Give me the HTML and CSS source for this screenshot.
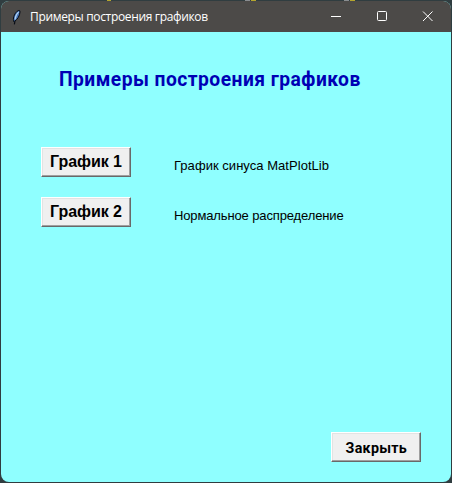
FILE: index.html
```html
<!DOCTYPE html>
<html lang="ru">
<head>
<meta charset="utf-8">
<title>Примеры построения графиков</title>
<link rel="stylesheet" href="styles.css">
</head>
<body>
<div class="window">
  <header class="titlebar">
    <svg class="feather" width="12" height="16" viewBox="0 0 12 16">
      <path d="M3 13 C1.500 10 3 5 6.200 2.300 C7.500 1.200 9.200 .8 9 3 C8.800 6.500 6.500 10.500 4 12" fill="#4a78b8" stroke="#080c14" stroke-width="1"/>
      <path d="M4 10.500 C4.300 7.500 5.800 4.500 7.700 2.800" fill="none" stroke="#b5d5f5" stroke-width="1.100"/>
      <path d="M4 11.500 L3.400 15.300" fill="none" stroke="#080c14" stroke-width="1.200"/>
    </svg>
    <span class="caption">Примеры построения графиков</span>
    <svg class="controls" width="104" height="12" viewBox="0 0 104 12" fill="none" stroke="#fff">
      <path d="M1 6.500H11"/>
      <rect x="47.500" y="1.500" width="9" height="9" rx="1"/>
      <path d="M93 1.500L102.500 11M102.500 1.500L93 11"/>
    </svg>
  </header>
  <main class="content">
    <h1 class="heading">Примеры построения графиков</h1>
    <div class="row">
      <button class="btn">График 1</button>
      <span class="label sine">График синуса MatPlotLib</span>
    </div>
    <div class="row">
      <button class="btn">График 2</button>
      <span class="label">Нормальное распределение</span>
    </div>
    <button class="btn close"><span class="close-text">Закрыть</span></button>
  </main>
</div>
</body>
</html>
```
FILE: styles.css
```css
* { box-sizing: border-box; }
body {
  margin: 0;
  height: 483px;
  padding: 1px;
  background:
    linear-gradient(#b5a52e, #b5a52e) 107px 0 / 4px 1px no-repeat,
    linear-gradient(#8a8d90, #8a8d90) 245px 0 / 5px 1px no-repeat,
    linear-gradient(#b5a52e, #b5a52e) 251px 0 / 5px 1px no-repeat,
    linear-gradient(#8a8d90, #8a8d90) 344px 0 / 5px 1px no-repeat,
    linear-gradient(#b5a52e, #b5a52e) 350px 0 / 5px 1px no-repeat,
    #303d40;
  overflow: hidden;
}
.window {
  width: 450px;
  height: 481px;
  border-radius: 8px;
  overflow: hidden;
  background: #8fffff;
  display: flex;
  flex-direction: column;
}
.titlebar {
  height: 31px;
  flex: none;
  display: flex;
  align-items: center;
  padding: 0 17px 0 10px;
  background: #4c4a48;
  color: #fff;
}
.feather { margin-right: 7px; }
.caption {
  font: 12px/16px "Open Sans", sans-serif;
  letter-spacing: -0.34px;
  white-space: nowrap;
}
.controls { margin: -1px 0 0 auto; }
.content {
  flex: 1;
  display: flex;
  flex-direction: column;
  padding: 34px 30px 20px 40px;
}
.heading {
  margin: 0 0 55px 18px;
  font: bold 21px/26px Roboto, sans-serif;
  letter-spacing: 0.5px;
  transform: scaleX(0.917);
  transform-origin: left;
  white-space: nowrap;
  color: #0000b4;
}
.row {
  display: flex;
  height: 30px;
  margin-bottom: 20px;
}
.btn {
  width: 90px;
  height: 30px;
  padding: 0;
  border: 1px solid;
  border-color: #fff #696969 #696969 #fff;
  box-shadow: inset -1px -1px #a0a0a0, inset 1px 1px #e3e3e3;
  background: #f0f0f0;
  color: #000;
  font: bold 16px/26px "Liberation Sans", sans-serif;
  letter-spacing: -0.05px;
  white-space: nowrap;
}
.label {
  margin: 11px 0 0 43px;
  font: 13px/16px "Liberation Sans", sans-serif;
  letter-spacing: -0.13px;
  white-space: nowrap;
  color: #000;
}
.sine { letter-spacing: 0.04px; }
.close {
  margin-top: auto;
  align-self: flex-end;
  font: bold 15px/26px Roboto, sans-serif;
  letter-spacing: 0.3px;
}
.close-text {
  display: inline-block;
  padding-top: 1px;
  transform: scaleX(0.95);
}
```
